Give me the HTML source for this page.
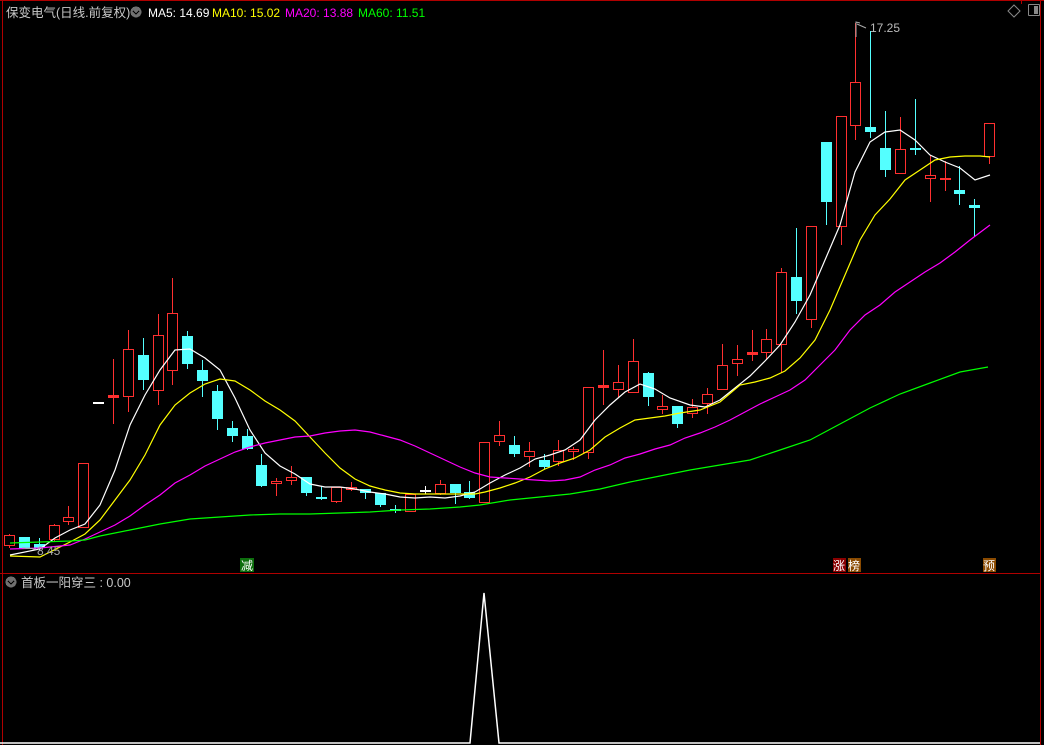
<!DOCTYPE html>
<html><head><meta charset="utf-8"><style>
html,body{margin:0;padding:0;background:#000;width:1044px;height:745px;overflow:hidden}
svg{display:block}
text{font-family:"Liberation Sans","Noto Sans CJK SC",sans-serif}
</style></head><body>
<svg id="s" width="1044" height="745" xmlns="http://www.w3.org/2000/svg" shape-rendering="crispEdges">
<rect width="1044" height="745" fill="#000"/>
<line x1="0" y1="0.5" x2="1044" y2="0.5" stroke="#b00000"/>
<line x1="2.5" y1="0" x2="2.5" y2="745" stroke="#b00000"/>
<line x1="1040.5" y1="0" x2="1040.5" y2="745" stroke="#b00000"/>
<line x1="0" y1="573.5" x2="1041" y2="573.5" stroke="#b00000"/>
<line x1="1021.5" y1="0" x2="1021.5" y2="4" stroke="#b00000"/>
<text x="6" y="17" font-size="12.5" fill="#c8c8c8">保变电气(日线.前复权)</text>
<circle cx="136" cy="12" r="5.5" fill="#707070"/>
<path d="M133 11 L136 14 L139 11" stroke="#000" stroke-width="1.3" fill="none"/>
<text x="148" y="17" font-size="12" fill="#ffffff">MA5: 14.69</text>
<text x="212" y="17" font-size="12" fill="#ffff00">MA10: 15.02</text>
<text x="285" y="17" font-size="12" fill="#ff00ff">MA20: 13.88</text>
<text x="358" y="17" font-size="12" fill="#00ff00">MA60: 11.51</text>
<path d="M1014 5 L1020 11 L1014 17 L1008 11 Z" stroke="#888" fill="none" shape-rendering="auto"/>
<rect x="1028.5" y="4.5" width="11" height="11" stroke="#888" fill="none" rx="1"/>
<rect x="1034" y="6" width="4" height="8" fill="#888"/>
<g id="c"></g>
<g id="m" fill="none" stroke-width="1.2" shape-rendering="auto"></g>
<path d="M856 37 L856 22 L860 23 M857 24 L866 28" stroke="#aaa" fill="none" shape-rendering="auto"/>
<text x="870" y="32" font-size="12" fill="#bbbbbb">17.25</text>
<path d="M22 548 L36 549" stroke="#aaa" fill="none"/>
<text x="37" y="555" font-size="12" fill="#aaaaaa">8.45</text>
<rect x="240" y="558" width="14" height="14" fill="#0d6e0d"/>
<text x="241" y="570" font-size="12" fill="#fff">减</text>
<rect x="833" y="558" width="13" height="14" fill="#8a0000"/>
<text x="833" y="570" font-size="12" fill="#fff">涨</text>
<rect x="848" y="558" width="13" height="14" fill="#8a4a00"/>
<text x="848" y="570" font-size="12" fill="#fff">榜</text>
<rect x="983" y="558" width="13" height="14" fill="#8a4a00"/>
<text x="983" y="570" font-size="12" fill="#fff">预</text>
<circle cx="11" cy="582" r="5.5" fill="#707070"/>
<path d="M8 581 L11 584 L14 581" stroke="#000" stroke-width="1.3" fill="none"/>
<text x="21" y="587" font-size="12.5" fill="#c8c8c8">首板一阳穿三 : 0.00</text>
<path d="M0 743 L470 743 L484 593 L499 743 L1040 743" stroke="#fff" stroke-width="1.5" fill="none" shape-rendering="auto"/>
</svg>
<script>
var R="#ff3030",C="#54ffff";
var d=[
["r",535,546,534,548],["c",537,548,537,548],["c",544,548,538,551],["r",525,540,524,542],["r",517,522,506,525],["r",463,528,463,528],
["w",403,403,403,403],["r",396,398,359,424],["r",349,397,330,412],["c",355,380,338,390],["r",335,391,314,405],["r",313,371,278,385],
["c",336,364,331,369],["c",370,381,360,397],["c",391,419,385,430],["c",428,436,421,442],["c",436,449,429,450],["c",465,486,454,487],
["r",481,484,478,496],["r",477,481,466,485],["c",477,493,477,496],["c",498,498,486,500],["r",487,502,487,503],["r",487,490,482,491],
["c",489,493,489,499],["c",493,505,493,507],["c",510,510,505,513],["r",494,512,494,512],["w",491,491,486,494],["r",484,494,480,495],
["c",484,493,484,504],["c",492,498,481,499],["r",442,503,442,503],["r",435,442,421,446],["c",445,454,436,457],["r",451,457,442,467],
["c",460,467,454,469],["r",450,462,440,466],["r",449,452,447,460],["r",387,453,387,459],["r",386,388,350,405],["r",382,390,365,397],
["r",361,393,339,393],["c",373,397,372,406],["r",406,410,395,414],["c",406,424,406,428],["r",407,414,399,418],["r",394,404,388,414],
["r",365,390,344,390],["r",359,364,345,376],["r",353,355,330,361],["r",339,353,329,360],["r",272,345,268,373],["c",277,301,228,314],
["r",226,320,226,328],["c",142,202,142,225],["r",116,227,116,245],["r",82,126,23,140],["c",127,132,31,138],["c",148,170,111,177],
["r",149,174,117,174],["c",149,149,99,155],["r",175,179,155,202],["r",179,179,161,191],["c",190,194,166,205],["c",205,208,199,237],
["r",123,157,123,164]];
var h="";
d.forEach(function(a,i){var x=Math.round(9+14.85*i),col=a[0]=="r"?R:a[0]=="c"?C:"#fff";
 h+='<rect x="'+x+'" y="'+a[3]+'" width="1" height="'+Math.max(1,a[4]-a[3])+'" fill="'+col+'"/>';
 var ht=a[2]-a[1];
 if(ht<3){h+='<rect x="'+(x-5)+'" y="'+(a[1]-1)+'" width="11" height="'+Math.max(2,ht+1)+'" fill="'+col+'"/>';}
 else if(a[0]=="r"){h+='<rect x="'+(x-5)+'" y="'+a[1]+'" width="11" height="'+ht+'" fill="'+col+'"/>';
  h+='<rect x="'+(x-4)+'" y="'+(a[1]+1)+'" width="9" height="'+(ht-2)+'" fill="#000"/>';}
 else h+='<rect x="'+(x-5)+'" y="'+a[1]+'" width="11" height="'+ht+'" fill="'+col+'"/>';
});
document.getElementById("c").innerHTML=h;
var L={
"#ffffff":"10,555 40,549 55,538 70,530 85,524 100,505 115,470 130,425 145,395 160,370 175,350 190,349 205,358 220,370 235,398 250,430 265,453 280,466 295,474 310,484 325,487 340,487 355,489 370,492 385,494 400,497 415,498 430,497 445,498 460,496 475,492 490,483 505,475 520,468 535,459 550,455 565,450 580,440 595,420 610,405 625,392 640,384 655,389 670,398 690,405 705,407 720,400 735,388 750,376 765,361 780,345 795,322 810,295 825,260 840,225 855,172 870,142 885,132 900,130 915,140 930,155 945,162 960,168 975,180 990,175",
"#ffff00":"10,556 40,557 70,542 85,534 100,520 115,500 130,480 145,455 160,425 175,405 190,393 205,384 220,379 235,381 250,390 265,401 280,410 295,421 310,437 325,453 340,468 355,479 370,486 385,490 400,493 415,494 475,494 485,492 500,488 515,483 530,477 545,469 560,463 575,458 590,450 605,437 620,428 635,420 650,418 665,416 680,413 700,410 720,402 740,385 755,382 770,378 785,371 800,358 815,340 830,310 845,275 860,240 875,215 890,199 905,180 920,170 935,160 950,157 965,156 980,156 990,157",
"#ff00ff":"10,549 40,548 70,545 85,539 100,532 115,525 130,516 145,505 160,495 175,483 190,475 205,466 220,459 235,452 250,447 265,443 280,440 295,437 310,436 325,433 340,431 355,430 370,432 385,436 400,440 415,446 430,453 445,460 460,467 475,473 490,477 505,478 520,479 535,480 550,481 565,480 580,477 595,470 610,465 625,458 640,454 655,449 670,445 685,438 700,433 715,427 730,420 745,412 760,404 775,397 790,390 805,380 820,365 835,350 850,330 865,315 880,305 895,292 910,282 925,272 940,263 955,252 970,240 990,225",
"#00ff00":"10,543 40,542 70,541 85,540 100,536 130,530 160,524 190,519 220,517 250,515 280,514 310,514 340,513 370,512 400,510 430,509 460,507 480,505 510,500 540,497 570,494 600,489 630,482 660,476 690,470 720,465 750,460 780,450 810,440 840,424 870,408 900,394 930,383 960,372 988,367"};
var m="";for(var k in L)m+='<polyline points="'+L[k]+'" stroke="'+k+'"/>';
document.getElementById("m").innerHTML=m;
</script>
</body></html>
